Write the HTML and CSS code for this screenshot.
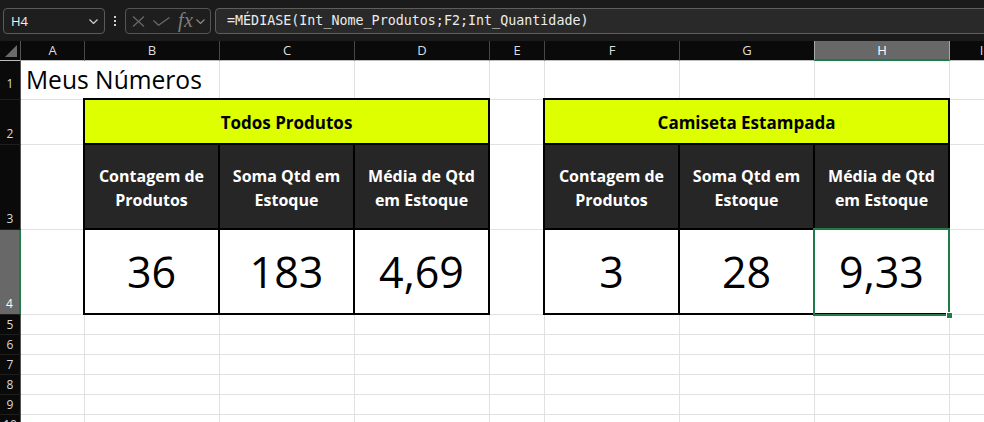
FILE: index.html
```html
<!DOCTYPE html>
<html lang="pt-BR">
<head>
<meta charset="utf-8">
<title>Meus Números</title>
<link rel="stylesheet" href="styles.css">
</head>
<body>
<div class="toolbar">
  <div class="namebox">
    <span class="nb-text">H4</span>
    <svg class="nb-chev" width="9" height="5" viewBox="0 0 9 5"><path d="M0.5 0.5 L4.5 4.5 L8.5 0.5" fill="none" stroke="#d0d0d0" stroke-width="1.2"/></svg>
  </div>
  <div class="dots"><span></span><span></span><span></span></div>
  <div class="fxbox">
    <svg class="ic-x" width="13" height="11" viewBox="0 0 13 11"><path d="M1 0.5 L12 10.5 M12 0.5 L1 10.5" stroke="#6a6a6a" stroke-width="1.2" fill="none"/></svg>
    <svg class="ic-check" width="17" height="9" viewBox="0 0 17 9"><path d="M0.5 3.5 L5.5 8.3 L16.5 0.5" stroke="#6a6a6a" stroke-width="1.2" fill="none"/></svg>
    <span class="fx">fx</span>
    <svg class="ic-chev" width="9" height="5" viewBox="0 0 9 5"><path d="M0.5 0.5 L4.5 4.5 L8.5 0.5" fill="none" stroke="#8a8a8a" stroke-width="1.2"/></svg>
  </div>
  <div class="formula">=MÉDIASE(Int_Nome_Produtos;F2;Int_Quantidade)</div>
</div>

<div class="sheet">
  <div class="tbl t1">
    <div class="tt">Todos Produtos</div>
    <div class="th">Contagem de<br>Produtos</div>
    <div class="th">Soma Qtd em<br>Estoque</div>
    <div class="th">Média de Qtd<br>em Estoque</div>
    <div class="tv">36</div>
    <div class="tv">183</div>
    <div class="tv">4,69</div>
  </div>
  <div class="tbl t2">
    <div class="tt">Camiseta Estampada</div>
    <div class="th">Contagem de<br>Produtos</div>
    <div class="th">Soma Qtd em<br>Estoque</div>
    <div class="th">Média de Qtd<br>em Estoque</div>
    <div class="tv">3</div>
    <div class="tv">28</div>
    <div class="tv sel">9,33</div>
  </div>

  <!-- column headers -->
  <div class="ch corner"><span class="tri"></span></div>
  <div class="ch">A</div><div class="ch">B</div><div class="ch">C</div><div class="ch">D</div>
  <div class="ch">E</div><div class="ch">F</div><div class="ch">G</div><div class="ch chsel">H</div><div class="ch">I</div>

  <!-- row 1 -->
  <div class="rh rh1">1</div>
  <div class="c title">Meus Números</div>
  <div class="c"></div><div class="c"></div><div class="c"></div><div class="c"></div><div class="c"></div><div class="c"></div><div class="c"></div>

  <!-- row 2 -->
  <div class="rh">2</div><div class="c"></div><div class="c"></div><div class="c"></div>
  <!-- row 3 -->
  <div class="rh">3</div><div class="c"></div><div class="c"></div><div class="c"></div>
  <!-- row 4 -->
  <div class="rh rhsel">4</div><div class="c"></div><div class="c"></div><div class="c"></div>

  <!-- rows 5-10 -->
  <div class="rh rs">5</div><div class="c"></div><div class="c"></div><div class="c"></div><div class="c"></div><div class="c"></div><div class="c"></div><div class="c"></div><div class="c"></div><div class="c"></div>
  <div class="rh rs">6</div><div class="c"></div><div class="c"></div><div class="c"></div><div class="c"></div><div class="c"></div><div class="c"></div><div class="c"></div><div class="c"></div><div class="c"></div>
  <div class="rh rs">7</div><div class="c"></div><div class="c"></div><div class="c"></div><div class="c"></div><div class="c"></div><div class="c"></div><div class="c"></div><div class="c"></div><div class="c"></div>
  <div class="rh rs">8</div><div class="c"></div><div class="c"></div><div class="c"></div><div class="c"></div><div class="c"></div><div class="c"></div><div class="c"></div><div class="c"></div><div class="c"></div>
  <div class="rh rs">9</div><div class="c"></div><div class="c"></div><div class="c"></div><div class="c"></div><div class="c"></div><div class="c"></div><div class="c"></div><div class="c"></div><div class="c"></div>
  <div class="rh rs">10</div><div class="c"></div><div class="c"></div><div class="c"></div><div class="c"></div><div class="c"></div><div class="c"></div><div class="c"></div><div class="c"></div><div class="c"></div>
</div>
</body>
</html>
```

FILE: styles.css
```css
* { box-sizing: border-box; }
html, body {
  margin: 0;
  padding: 0;
  width: 984px;
  height: 422px;
  overflow: hidden;
  background: #fff;
}

/* ---------- formula bar ---------- */
.toolbar {
  height: 41px;
  background: #1b1b1b;
  display: flex;
  align-items: flex-start;
  padding-top: 8px;
  padding-left: 3px;
  font-family: "Open Sans", "Noto Sans", sans-serif;
}
.namebox {
  width: 102px;
  height: 26px;
  border: 1px solid #5a5a5a;
  border-radius: 4px;
  background: #1e1e1e;
  display: flex;
  align-items: center;
  padding-left: 7px;
  padding-right: 6px;
}
.nb-text {
  color: #f2f2f2;
  font-size: 13px;
  flex: 1;
}
.nb-chev { display: block; margin-top: 1px; }
.dots {
  width: 20px;
  height: 26px;
  display: flex;
  flex-direction: column;
  align-items: center;
  justify-content: center;
  gap: 2px;
}
.dots span {
  width: 2px;
  height: 2px;
  background: #d0d0d0;
}
.fxbox {
  width: 86px;
  height: 26px;
  border: 1px solid #555;
  border-radius: 4px;
  background: #1e1e1e;
  display: flex;
  align-items: center;
  padding-left: 6px;
}
.ic-x { display: block; }
.ic-check { display: block; margin-left: 8px; }
.fx {
  margin-left: 8px;
  font-family: "Liberation Serif", "DejaVu Serif", serif;
  font-style: italic;
  font-size: 20px;
  letter-spacing: 0.5px;
  color: #7e7e7e;
  line-height: 1;
  margin-top: -2px;
}
.ic-chev { display: block; margin-left: 3px; margin-top: 1px; }
.formula {
  flex: 1;
  margin-left: 4px;
  margin-right: -20px;
  height: 26px;
  border: 1px solid #5e5e5e;
  border-radius: 4px;
  background: #292929;
  color: #ececec;
  font-family: "DejaVu Sans Mono", "Liberation Mono", monospace;
  font-size: 13.35px;
  line-height: 24px;
  padding-left: 11px;
  white-space: nowrap;
}

/* ---------- sheet grid ---------- */
.sheet {
  display: grid;
  grid-template-columns: 21px 64px 135px 135px 135px 55px 135px 135px 135px 64px;
  grid-template-rows: 20px 39px 45px 85px 85px repeat(6, 20px);
  background: #fff;
  font-family: "Open Sans", "Noto Sans", sans-serif;
}
.ch {
  background: #0a0a0a;
  color: #dedede;
  font-size: 13px;
  border-right: 1px solid #474747;
  border-bottom: 1px solid #bdbdbd;
  display: flex;
  align-items: center;
  justify-content: center;
  line-height: 1;
}
.ch.corner {
  position: relative;
  border-right: 1px solid #555;
}
.tri {
  position: absolute;
  right: 3px;
  bottom: 3px;
  width: 0;
  height: 0;
  border-left: 12px solid transparent;
  border-bottom: 12px solid #6a6a6a;
}
.ch.chsel {
  background: #686868;
  color: #fff;
  border-left: 1px solid #a8a8a8;
  border-right: 1px solid #a8a8a8;
  border-bottom: 2px solid #1f7a4a;
  margin-left: -1px;
}
.rh {
  background: #0a0a0a;
  color: #dadada;
  font-size: 12px;
  line-height: 14px;
  border-right: 1px solid #555;
  border-bottom: 1px solid #1e1e1e;
  display: flex;
  justify-content: center;
  align-items: flex-end;
  padding-bottom: 3px;
}
.rh.rh1 { padding-bottom: 8px; }
.rh.rs { align-items: center; padding-bottom: 0; }
.rh.rhsel {
  background: #686868;
  color: #fff;
  border-right: 2px solid #1f7a4a;
}
.c {
  border-right: 1px solid #e1e1e1;
  border-bottom: 1px solid #e1e1e1;
}
.c.title {
  grid-column: span 2;
  font-size: 24.6px;
  line-height: 30px;
  padding: 4px 0 0 5px;
  color: #000;
  white-space: nowrap;
}

/* ---------- tables ---------- */
.tbl {
  z-index: 1;
  margin: -2px 0 0 -2px;
  background: #000;
  padding: 2px;
  display: grid;
  grid-template-columns: repeat(3, 1fr);
  grid-template-rows: 43px 83px 83px;
  gap: 2px;
}
.t1 { grid-column: 3 / 6; grid-row: 3 / 6; }
.t2 { grid-column: 7 / 10; grid-row: 3 / 6; }
.tt {
  grid-column: 1 / -1;
  background: #ddff00;
  color: #000;
  font-weight: 700;
  font-size: 17px;
  line-height: 24px;
  display: flex;
  align-items: center;
  justify-content: center;
  padding-top: 3px;
}
.th {
  background: #262626;
  color: #fff;
  font-weight: 700;
  font-size: 16px;
  line-height: 24px;
  text-align: center;
  display: flex;
  align-items: center;
  justify-content: center;
  padding-top: 2px;
}
.tv {
  background: #fff;
  color: #000;
  font-size: 43px;
  line-height: 43px;
  display: flex;
  align-items: center;
  justify-content: center;
}
.tv.sel { position: relative; }
.tv.sel::after {
  content: "";
  position: absolute;
  top: -2px;
  left: -2px;
  right: -2px;
  bottom: -3px;
  border: 2px solid #1f7a4a;
}
.tv.sel::before {
  content: "";
  position: absolute;
  right: -4px;
  bottom: -5px;
  width: 5px;
  height: 5px;
  background: #1f7a4a;
  box-shadow: 0 0 0 1px #fff;
  z-index: 2;
}
```
